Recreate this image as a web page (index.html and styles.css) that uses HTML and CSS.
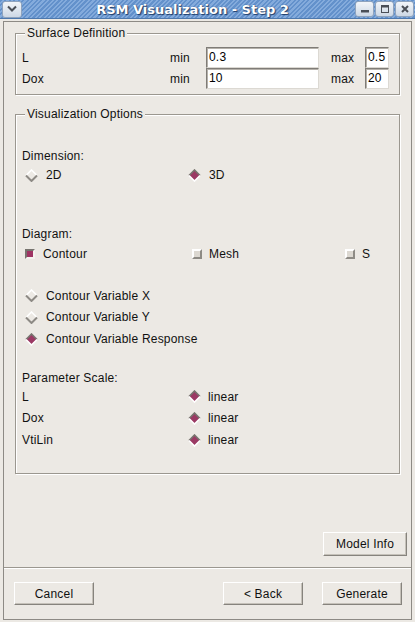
FILE: index.html
```html
<!DOCTYPE html>
<html>
<head>
<meta charset="utf-8">
<title>RSM Visualization - Step 2</title>
<link rel="stylesheet" href="styles.css">
</head>
<body>
<div class="window">
  <div class="titlebar">
    <div class="tb-btn tb-menu">
      <svg width="12" height="8" viewBox="0 0 12 8"><path d="M2 1.5 L6 5.5 L10 1.5" stroke="#4a4f57" stroke-width="2" fill="none"/></svg>
    </div>
    <div class="title">RSM Visualization - Step 2</div>
    <div class="tb-group">
      <div class="tb-btn">
        <svg width="10" height="10" viewBox="0 0 10 10"><rect x="1" y="6" width="8" height="2.5" fill="#4a4f57"/></svg>
      </div>
      <div class="tb-btn">
        <svg width="10" height="10" viewBox="0 0 10 10"><rect x="1.5" y="1.5" width="7" height="7" fill="none" stroke="#4a4f57" stroke-width="1"/><rect x="1" y="1" width="8" height="2.5" fill="#4a4f57"/></svg>
      </div>
      <div class="tb-btn">
        <svg width="10" height="10" viewBox="0 0 10 10"><path d="M2 2 L8 8 M8 2 L2 8" stroke="#4a4f57" stroke-width="2"/></svg>
      </div>
    </div>
  </div>
  <div class="frame">
    <div class="body">
      <fieldset class="group surface">
        <legend>Surface Definition</legend>
        <div class="range-grid">
          <span>L</span><span>min</span><div class="field">0.3</div><span class="max">max</span><div class="field">0.5</div>
          <span>Dox</span><span>min</span><div class="field">10</div><span class="max">max</span><div class="field">20</div>
        </div>
      </fieldset>

      <fieldset class="group options">
        <legend>Visualization Options</legend>
        <div class="lbl dim">Dimension:</div>
        <div class="opt-row h18">
          <div class="radio">
            <svg class="rb" width="13" height="13" viewBox="0 0 13 13"><path d="M1 6.5 L6.5 1 L12 6.5" stroke="#fff" stroke-width="1.6" fill="none"/><path d="M1 6.5 L6.5 12 L12 6.5" stroke="#8d8a85" stroke-width="2" fill="none"/></svg>
            <span>2D</span>
          </div>
          <div class="radio">
            <svg class="rb" width="13" height="13" viewBox="0 0 13 13"><polygon points="6.5,1 12,6.5 6.5,12 1,6.5" fill="#9b3a64"/><path d="M1 6.5 L6.5 1 L12 6.5" stroke="#77746f" stroke-width="1.6" fill="none"/><path d="M1 6.5 L6.5 12 L12 6.5" stroke="#fff" stroke-width="1.6" fill="none"/></svg>
            <span>3D</span>
          </div>
        </div>

        <div class="lbl diagram">Diagram:</div>
        <div class="check-row">
          <div class="check"><span class="cb on"></span><span>Contour</span></div>
          <div class="check"><span class="cb"></span><span>Mesh</span></div>
          <div class="check"><span class="cb"></span><span>S</span></div>
        </div>

        <div class="cv-list">
          <div class="radio h21">
            <svg class="rb" width="13" height="13" viewBox="0 0 13 13"><path d="M1 6.5 L6.5 1 L12 6.5" stroke="#fff" stroke-width="1.6" fill="none"/><path d="M1 6.5 L6.5 12 L12 6.5" stroke="#8d8a85" stroke-width="2" fill="none"/></svg>
            <span>Contour Variable X</span>
          </div>
          <div class="radio h22">
            <svg class="rb" width="13" height="13" viewBox="0 0 13 13"><path d="M1 6.5 L6.5 1 L12 6.5" stroke="#fff" stroke-width="1.6" fill="none"/><path d="M1 6.5 L6.5 12 L12 6.5" stroke="#8d8a85" stroke-width="2" fill="none"/></svg>
            <span>Contour Variable Y</span>
          </div>
          <div class="radio h22">
            <svg class="rb" width="13" height="13" viewBox="0 0 13 13"><polygon points="6.5,1 12,6.5 6.5,12 1,6.5" fill="#9b3a64"/><path d="M1 6.5 L6.5 1 L12 6.5" stroke="#77746f" stroke-width="1.6" fill="none"/><path d="M1 6.5 L6.5 12 L12 6.5" stroke="#fff" stroke-width="1.6" fill="none"/></svg>
            <span>Contour Variable Response</span>
          </div>
        </div>

        <div class="lbl param">Parameter Scale:</div>
        <div class="opt-row h21">
          <span>L</span>
          <div class="radio">
            <svg class="rb" width="13" height="13" viewBox="0 0 13 13"><polygon points="6.5,1 12,6.5 6.5,12 1,6.5" fill="#9b3a64"/><path d="M1 6.5 L6.5 1 L12 6.5" stroke="#77746f" stroke-width="1.6" fill="none"/><path d="M1 6.5 L6.5 12 L12 6.5" stroke="#fff" stroke-width="1.6" fill="none"/></svg>
            <span class="lin">linear</span>
          </div>
        </div>
        <div class="opt-row h22">
          <span>Dox</span>
          <div class="radio">
            <svg class="rb" width="13" height="13" viewBox="0 0 13 13"><polygon points="6.5,1 12,6.5 6.5,12 1,6.5" fill="#9b3a64"/><path d="M1 6.5 L6.5 1 L12 6.5" stroke="#77746f" stroke-width="1.6" fill="none"/><path d="M1 6.5 L6.5 12 L12 6.5" stroke="#fff" stroke-width="1.6" fill="none"/></svg>
            <span class="lin">linear</span>
          </div>
        </div>
        <div class="opt-row h22">
          <span>VtiLin</span>
          <div class="radio">
            <svg class="rb" width="13" height="13" viewBox="0 0 13 13"><polygon points="6.5,1 12,6.5 6.5,12 1,6.5" fill="#9b3a64"/><path d="M1 6.5 L6.5 1 L12 6.5" stroke="#77746f" stroke-width="1.6" fill="none"/><path d="M1 6.5 L6.5 12 L12 6.5" stroke="#fff" stroke-width="1.6" fill="none"/></svg>
            <span class="lin">linear</span>
          </div>
        </div>
      </fieldset>

      <div class="model-row"><button class="btn model">Model Info</button></div>
      <div class="separator"></div>
      <div class="actions">
        <button class="btn">Cancel</button>
        <div class="actions-right">
          <button class="btn">&lt; Back</button>
          <button class="btn">Generate</button>
        </div>
      </div>
    </div>
  </div>
</div>
</body>
</html>
```

FILE: styles.css
```css
* { box-sizing: border-box; }

body {
  margin: 0;
  background: #ece9e4;
  font-family: "Liberation Sans", Arial, sans-serif;
  font-size: 12px;
  letter-spacing: 0.2px;
  color: #111;
}

.window {
  width: 415px;
  height: 622px;
  display: flex;
  flex-direction: column;
  background: #ece9e4;
  overflow: hidden;
}

/* ---- title bar ---- */
.titlebar {
  height: 19px;
  flex: none;
  display: flex;
  align-items: center;
  padding: 0 1px 0 2px;
  background: repeating-linear-gradient(135deg, #6391cb 0 1.6px, #84abdc 1.6px 3.2px);
  border-bottom: 1px solid #4d78ad;
}

.tb-btn {
  width: 19px;
  height: 16px;
  border: 1px solid #8fa3bd;
  border-radius: 3px;
  background: linear-gradient(#f2f5f9, #cdd8e5);
  display: flex;
  align-items: center;
  justify-content: center;
}

.tb-menu { width: 20px; height: 17px; }

.title {
  flex: 1;
  text-align: center;
  padding-left: 8px;
  font-family: "DejaVu Sans", sans-serif;
  font-weight: bold;
  font-size: 13px;
  letter-spacing: 0;
  color: #fff;
  text-shadow: 1px 1px 1px #1f3c68, 0 0 1px #2a4b7c;
  white-space: nowrap;
}

.tb-group { display: flex; gap: 1px; }

/* ---- frame ---- */
.frame {
  flex: 1;
  display: flex;
  padding: 2px 3px 2px 3px;
}

.body {
  flex: 1;
  display: flex;
  flex-direction: column;
  border: 1px solid #8d8a85;
}

/* ---- group boxes ---- */
.group {
  margin: 0 11px;
  padding: 0 0 0 6px;
  border: 1px solid #9b978f;
  box-shadow: 1px 1px 0 #fff, inset 1px 1px 0 #fff;
  min-width: 0;
}

.group legend {
  margin-left: 3px;
  padding: 0 2px;
  line-height: 14px;
  font-size: 12px;
  background: #ece9e4;
}

.surface { margin-top: 4px; padding-top: 7px; padding-bottom: 5px; }

.range-grid {
  display: grid;
  grid-template-columns: 148px 36px 113px 46px 24px;
  grid-auto-rows: 21px;
  align-items: center;
}

.max { padding-left: 12px; }

.field {
  height: 21px;
  border: 1px solid;
  border-color: #7f7c77 #dcd9d3 #dcd9d3 #7f7c77;
  box-shadow: inset 1px 1px 0 #b5b1aa;
  background: #fff;
  padding-left: 2px;
  line-height: 19px;
  color: #000;
}

.options { margin-top: 12px; padding-top: 26px; padding-bottom: 22px; }

.lbl { height: 18px; line-height: 18px; }
.dim { height: 19px; }
.diagram { margin-top: 41px; }
.param { margin-top: 20px; height: 16px; line-height: 16px; }

.opt-row {
  display: grid;
  grid-template-columns: 163px 1fr;
  align-items: center;
}

.h18 { height: 18px; }
.h21 { height: 21px; }
.h22 { height: 22px; }

.radio {
  display: flex;
  align-items: center;
  gap: 8px;
}

.rb { margin-left: 3px; flex: none; }
.lin { margin-left: -1px; }

.check-row {
  margin-top: 1px;
  height: 20px;
  display: grid;
  grid-template-columns: 167px 153px auto;
  align-items: center;
}

.check { display: flex; align-items: center; gap: 7px; }
.check:first-child { gap: 8px; }

.cb {
  width: 10px;
  height: 10px;
  margin-left: 3px;
  flex: none;
  border: 2px solid;
  border-color: #fff #8e8b85 #8e8b85 #fff;
  background: #dcd8d1;
}

.cb.on {
  border-color: #77746f #f4f2ee #f4f2ee #77746f;
  background: #9e3463;
}

.cv-list { margin-top: 21px; }

/* ---- buttons ---- */
.model-row {
  margin-top: auto;
  display: flex;
  justify-content: flex-end;
  padding-right: 4px;
  margin-bottom: 11px;
}

.btn {
  font-family: "Liberation Sans", Arial, sans-serif;
  font-size: 12px;
  letter-spacing: 0.2px;
  color: #111;
  width: 80px;
  height: 23px;
  padding: 0;
  background: #ece9e4;
  border: 1px solid;
  border-color: #fff #86837d #86837d #fff;
  box-shadow: inset -1px -1px 0 #c5c1b9;
}

.btn.model { width: 84px; height: 24px; }

.separator {
  height: 2px;
  border-top: 1px solid #9b978f;
  border-bottom: 1px solid #fff;
}

.actions {
  height: 50px;
  flex: none;
  display: flex;
  justify-content: space-between;
  align-items: flex-start;
  padding: 13px 9px 0 10px;
}

.actions-right { display: flex; gap: 19px; }
```
